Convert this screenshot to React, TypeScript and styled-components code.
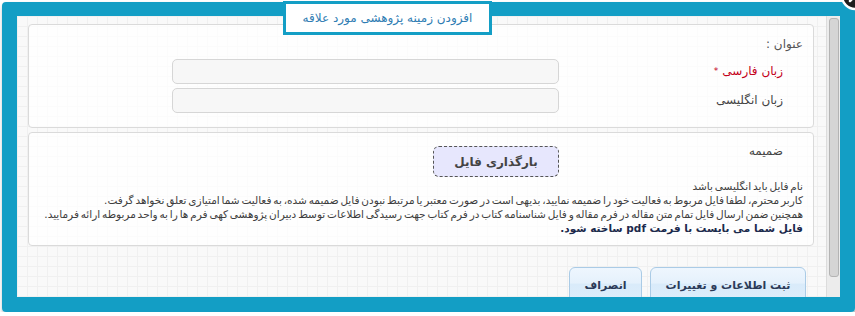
import styled, { createGlobalStyle } from "styled-components";

const Global = createGlobalStyle`
  html, body {
    margin: 0;
    padding: 0;
    background: #ffffff;
    overflow: hidden;
  }
  body {
    font-family: "DejaVu Sans", Tahoma, sans-serif;
  }
`;

const Frame = styled.div`
  position: relative;
  margin: 2px 0 0 2px;
  width: 823px;
  border-style: solid;
  border-color: #139ec5;
  border-width: 14px 15px 15px 15px;
  border-radius: 4px;
  box-shadow: 1px 3px 4px rgba(0, 0, 0, 0.35);
`;

const TitleTab = styled.div`
  position: absolute;
  left: 266px;
  top: -15px;
  width: 203px;
  height: 28px;
  border: 3px solid #139ec5;
  background: #ffffff;
  display: flex;
  align-items: center;
  justify-content: center;
  direction: rtl;
  font-size: 12px;
  color: #2f7db3;
  z-index: 2;
`;

const CloseButton = styled.svg`
  position: absolute;
  left: 823px;
  top: -35px;
  width: 30px;
  height: 30px;
  z-index: 3;
`;

const Inner = styled.div`
  display: flex;
  height: 281px;
  overflow: hidden;
  background-color: #f9f9f9;
  background-image: linear-gradient(#f0f0f0 1px, transparent 1px),
    linear-gradient(90deg, #f0f0f0 1px, transparent 1px);
  background-size: 10px 10px;
`;

const Main = styled.div`
  flex: 1;
  direction: rtl;
  padding: 8px 12px 0 11px;
  display: flex;
  flex-direction: column;
  gap: 4px;
`;

const Fieldset = styled.div<{ $pad: string }>`
  background: rgba(255, 255, 255, 0.75);
  border: 1px solid #dadada;
  border-radius: 4px;
  padding: ${(p) => p.$pad};
`;

const Heading = styled.div`
  font-size: 12px;
  line-height: 18px;
  color: #555555;
  margin-bottom: 6px;
`;

const FieldRow = styled.div<{ $gap?: number }>`
  display: flex;
  align-items: flex-start;
  margin-top: ${(p) => p.$gap ?? 0}px;
`;

const Label = styled.div<{ $required?: boolean; $top?: number }>`
  width: 244px;
  box-sizing: border-box;
  padding-right: 20px;
  font-size: 12px;
  line-height: ${(p) => (p.$top !== undefined ? "14px" : "25px")};
  margin-top: ${(p) => p.$top ?? 0}px;
  color: ${(p) => (p.$required ? "#c4001a" : "#444444")};
`;

const Star = styled.span`
  font-size: 9px;
  margin-right: 4px;
  vertical-align: middle;
`;

const Input = styled.input`
  width: 387px;
  height: 25px;
  box-sizing: border-box;
  border: 1px solid #d6d6d6;
  border-radius: 5px;
  background: #f7f7f7;
  outline: none;
`;

const UploadButton = styled.button`
  width: 126px;
  height: 31px;
  margin-top: 2px;
  border: 1px dashed #555555;
  border-radius: 6px;
  background: #e7e7fd;
  font-family: inherit;
  font-weight: bold;
  font-size: 12px;
  color: #444444;
  cursor: pointer;
`;

const Notes = styled.div`
  margin-top: 2px;
  font-size: 10.5px;
  line-height: 14px;
  word-spacing: -1.5px;
  color: #3d3d3d;
`;

const Strong = styled.div`
  font-weight: bold;
  word-spacing: 0;
  color: #1c2a4c;
`;

const Actions = styled.div`
  display: flex;
  gap: 8px;
  margin-top: 17px;
  padding-right: 8px;
`;

const ActionButton = styled.button<{ $width: number }>`
  width: ${(p) => p.$width}px;
  height: 40px;
  padding: 0 0 4px;
  border: 1px solid #aacbe6;
  border-radius: 6px 6px 0 0;
  background: linear-gradient(#eef6fe 0%, #e5f1fc 40%, #d9ebfa 42%, #dfeefb 100%);
  font-family: inherit;
  font-weight: bold;
  font-size: 11px;
  color: #2b3a58;
  cursor: pointer;
`;

const Scrollbar = styled.div`
  width: 14px;
  background: #ececec;
  border-left: 1px solid #dcdcdc;
  box-sizing: border-box;
  padding: 2px 1px 0 2px;
`;

const Thumb = styled.div`
  height: 259px;
  background: #d5d5d5;
  border: 1px solid #b4b4b4;
  border-radius: 3px;
  box-sizing: border-box;
`;

export default function App() {
  return (
    <>
      <Global />
      <Frame>
        <TitleTab>افزودن زمینه پژوهشی مورد علاقه</TitleTab>
        <CloseButton viewBox="0 0 30 30">
          <circle cx="15" cy="15" r="13" fill="#1e1e1e" stroke="#ffffff" strokeWidth="2.5" />
          <path d="M10 10 L20 20 M20 10 L10 20" stroke="#ffffff" strokeWidth="2.5" strokeLinecap="round" />
        </CloseButton>
        <Inner>
          <Main>
            <Fieldset $pad="10px 10px 14px 10px">
              <Heading>عنوان :</Heading>
              <FieldRow>
                <Label $required>
                  زبان فارسی<Star>*</Star>
                </Label>
                <Input type="text" />
              </FieldRow>
              <FieldRow $gap={4}>
                <Label>زبان انگلیسی</Label>
                <Input type="text" />
              </FieldRow>
            </Fieldset>
            <Fieldset $pad="11px 10px 10px 10px">
              <FieldRow>
                <Label $top={0}>ضمیمه</Label>
                <UploadButton type="button">بارگذاری فایل</UploadButton>
              </FieldRow>
              <Notes>
                <div>نام فایل باید انگلیسی باشد</div>
                <div>
                  کاربر محترم، لطفا فایل مربوط به فعالیت خود را ضمیمه نمایید، بدیهی است در صورت معتبر یا مرتبط نبودن فایل ضمیمه شده، به فعالیت شما امتیازی تعلق نخواهد گرفت.
                </div>
                <div>
                  همچنین ضمن ارسال فایل تمام متن مقاله در فرم مقاله و فایل شناسنامه کتاب در فرم کتاب جهت رسیدگی اطلاعات توسط دبیران پژوهشی کهی فرم ها را به واحد مربوطه ارائه فرمایید.
                </div>
                <Strong>فایل شما می بایست با فرمت pdf ساخته شود.</Strong>
              </Notes>
            </Fieldset>
            <Actions>
              <ActionButton type="button" $width={156}>ثبت اطلاعات و تغییرات</ActionButton>
              <ActionButton type="button" $width={73}>انصراف</ActionButton>
            </Actions>
          </Main>
          <Scrollbar>
            <Thumb />
          </Scrollbar>
        </Inner>
      </Frame>
    </>
  );
}
